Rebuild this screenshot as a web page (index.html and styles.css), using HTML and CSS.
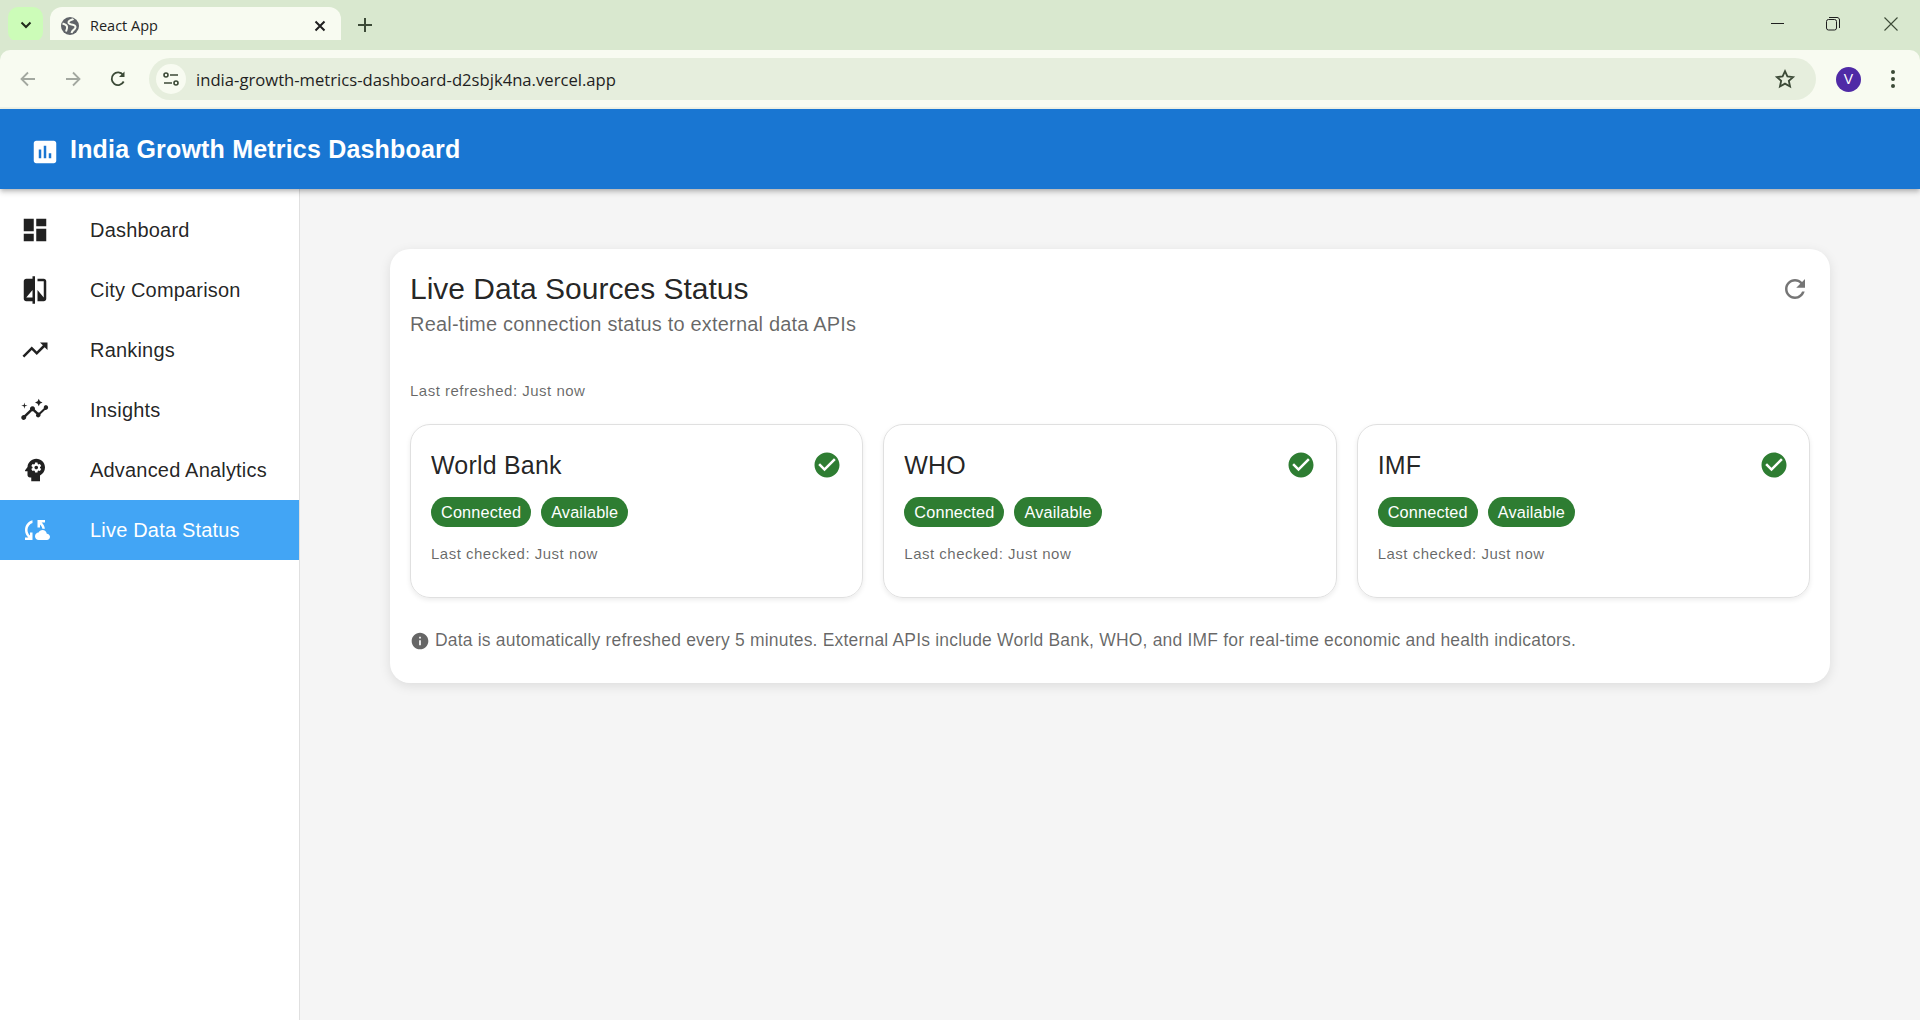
FILE: index.html
```html
<!DOCTYPE html>
<html lang="en">
<head>
    <meta charset="UTF-8">
    <meta name="viewport" content="width=device-width, initial-scale=1.0">
    <title>React App</title>
    <link rel="stylesheet" href="styles.css">
</head>
<body>
    <!-- browser chrome -->
    <div class="tabstrip">
        <div class="tab-search">
            <svg width="20" height="20" viewBox="0 0 20 20"><path d="M5.5 7.5 10 12l4.500-4.500" fill="none" stroke="#1f2a1a" stroke-width="2"/></svg>
        </div>
        <div class="tab">
            <svg class="favicon" width="20" height="20" viewBox="0 0 20 20"><circle cx="10" cy="10" r="9" fill="#5f6368"/><path d="M13.500 3c-1.500 1-4.500 1-5 3s3 2.500 5 3 2.500 2 1.500 3.500-3 2-3.500 4.500M2.500 7.500c2 .5 4 1 4.500 3s-.5 3.500-1 5" fill="none" stroke="#f8fbf1" stroke-width="2"/></svg>
            <span class="tab-title">React App</span>
            <svg class="tab-close" width="14" height="14" viewBox="0 0 14 14"><path d="M2.500 2.500l9 9m0-9-9 9" stroke="#1f1f1f" stroke-width="2"/></svg>
        </div>
        <svg class="new-tab" width="16" height="16" viewBox="0 0 16 16"><path d="M8 1v14M1 8h14" stroke="#3c4a37" stroke-width="2"/></svg>
        <div class="window-controls">
            <svg width="14" height="14" viewBox="0 0 14 14"><path d="M0 6.500h13" stroke="#1f1f1f" stroke-width="1"/></svg>
            <svg width="14" height="14" viewBox="0 0 14 14"><rect x=".5" y="2.500" width="10" height="10.500" rx="2" fill="none" stroke="#1f1f1f"/><path d="M3 .5h8c1.500 0 2.500 1 2.500 2.500v8" fill="none" stroke="#1f1f1f"/></svg>
            <svg width="14" height="14" viewBox="0 0 14 14"><path d="M.5.5l13 13m0-13-13 13" stroke="#3c4a37" stroke-width="1.100"/></svg>
        </div>
    </div>
    <div class="toolbar">
        <svg class="nav-btn" width="18" height="18" viewBox="0 0 18 18"><path d="M16 9H3m6-6.500L2.500 9 9 15.500" fill="none" stroke="#a3a8a0" stroke-width="1.800"/></svg>
        <svg class="nav-btn" width="18" height="18" viewBox="0 0 18 18"><path d="M2 9h13M9 2.500 15.500 9 9 15.500" fill="none" stroke="#a3a8a0" stroke-width="1.800"/></svg>
        <svg class="nav-btn" width="18" height="18" viewBox="0 0 18 18"><path d="M14.700 11.500a6.300 6.300 0 1 1-.6-6.500" fill="none" stroke="#3c4a37" stroke-width="1.800"/><path d="M15.500 1.500v5.500H10z" fill="#3c4a37"/></svg>
        <div class="omnibox">
            <div class="site-info">
                <svg width="18" height="18" viewBox="0 0 18 18"><circle cx="4" cy="5" r="2" fill="none" stroke="#3c4a37" stroke-width="1.600"/><path d="M8 5h8M2 13h8" stroke="#3c4a37" stroke-width="1.600"/><circle cx="14" cy="13" r="2" fill="none" stroke="#3c4a37" stroke-width="1.600"/></svg>
            </div>
            <span class="url">india-growth-metrics-dashboard-d2sbjk4na.vercel.app</span>
            <svg class="star" width="22" height="22" viewBox="0 0 24 24"><path d="M12 3.500l2.600 5.700 6.200.7-4.600 4.200 1.300 6.100-5.500-3.100-5.500 3.100 1.300-6.100-4.600-4.200 6.200-.7z" fill="none" stroke="#3c4a37" stroke-width="2"/></svg>
        </div>
        <div class="avatar">V</div>
        <svg class="kebab" width="6" height="20" viewBox="0 0 6 20"><circle cx="3" cy="3" r="2" fill="#3c4a37"/><circle cx="3" cy="10" r="2" fill="#3c4a37"/><circle cx="3" cy="17" r="2" fill="#3c4a37"/></svg>
    </div>

    <!-- app -->
    <header class="app-bar">
        <svg class="app-bar-icon" viewBox="0 0 24 24"><path d="M19 3H5c-1.100 0-2 .9-2 2v14c0 1.100.9 2 2 2h14c1.100 0 2-.9 2-2V5c0-1.100-.9-2-2-2zM9 17H7v-7h2v7zm4 0h-2V7h2v10zm4 0h-2v-4h2v4z"/></svg>
        <h1>India Growth Metrics Dashboard</h1>
    </header>
    <div class="layout">
        <nav class="sidebar">
            <a class="nav-item">
                <svg class="nav-icon" viewBox="0 0 24 24"><path d="M3 13h8V3H3v10zm0 8h8v-6H3v6zm10 0h8V11h-8v10zm0-18v6h8V3h-8z"/></svg>
                <span>Dashboard</span>
            </a>
            <a class="nav-item">
                <svg class="nav-icon" viewBox="0 0 24 24"><path d="M10 3H5c-1.100 0-2 .9-2 2v14c0 1.100.9 2 2 2h5v2h2V1h-2v2zm0 15H5l5-6v6zm9-15h-5v2h5v13l-5-6v9h5c1.100 0 2-.9 2-2V5c0-1.100-.9-2-2-2z"/></svg>
                <span>City Comparison</span>
            </a>
            <a class="nav-item">
                <svg class="nav-icon" viewBox="0 0 24 24"><path d="m16 6 2.290 2.290-4.880 4.880-4-4L2 16.590 3.410 18l6-6 4 4 6.300-6.290L22 12V6z"/></svg>
                <span>Rankings</span>
            </a>
            <a class="nav-item">
                <svg class="nav-icon" viewBox="0 0 24 24"><path d="M21 8c-1.450 0-2.260 1.440-1.930 2.510l-3.550 3.560c-.3-.09-.74-.09-1.040 0l-2.550-2.550C12.270 10.450 11.460 9 10 9c-1.450 0-2.270 1.440-1.930 2.520l-4.560 4.550C2.440 15.740 1 16.550 1 18c0 1.100.9 2 2 2 1.450 0 2.260-1.440 1.930-2.510l4.550-4.560c.3.09.74.09 1.040 0l2.550 2.550C12.270 16.550 13.080 18 14.500 18c1.450 0 2.270-1.440 1.930-2.520l3.560-3.550c1.070.33 2.510-.48 2.510-1.930 0-1.100-.9-2-2-2z"/><path d="m15 9 .94-2.070L18 6l-2.060-.93L15 3l-.92 2.070L12 6l2.080.93zM3.500 11 4 9l2-.5L4 8l-.5-2L3 8l-2 .5L3 9z"/></svg>
                <span>Insights</span>
            </a>
            <a class="nav-item">
                <svg class="nav-icon" viewBox="0 0 24 24"><path d="M13 8.570c-.79 0-1.430.64-1.430 1.430s.64 1.430 1.430 1.430 1.430-.64 1.430-1.430-.64-1.430-1.430-1.430z"/><path d="M13 3C9.250 3 6.200 5.940 6.020 9.640L4.100 12.200c-.25.33-.01.8.4.8H6v3c0 1.100.9 2 2 2h1v3h7v-4.680c2.360-1.120 4-3.530 4-6.320 0-3.870-3.130-7-7-7zm3 7c0 .13-.01.26-.02.39l.83.66c.08.06.1.16.05.25l-.8 1.390c-.05.09-.16.12-.24.09l-.99-.4c-.21.16-.43.29-.67.39L14 13.830c-.01.1-.1.17-.2.17h-1.600c-.1 0-.18-.07-.2-.17l-.15-1.060c-.25-.1-.47-.23-.68-.39l-.99.4c-.09.03-.2 0-.25-.09l-.8-1.390c-.05-.08-.03-.19.05-.25l.84-.66c-.01-.13-.02-.26-.02-.39s.02-.27.04-.39l-.85-.66c-.08-.06-.1-.16-.05-.26l.8-1.380c.05-.09.15-.12.24-.09l1 .4c.2-.15.43-.29.67-.39L12 6.170c.02-.1.1-.17.2-.17h1.600c.1 0 .18.07.2.17l.15 1.060c.24.1.46.23.67.39l1-.4c.09-.03.2 0 .24.09l.8 1.380c.05.09.03.2-.05.26l-.85.66c.03.12.04.25.04.39z"/></svg>
                <span>Advanced Analytics</span>
            </a>
            <a class="nav-item active">
                <svg class="nav-icon" viewBox="0 0 24 24"><path d="M21.500 14.980c-.02 0-.03 0-.05.01C21.200 13.300 19.760 12 18 12c-1.400 0-2.600.83-3.160 2.020C13.260 14.100 12 15.400 12 17c0 1.660 1.340 3 3 3l6.500-.02c1.380 0 2.500-1.120 2.500-2.500s-1.120-2.500-2.500-2.500zM10 4.260v2.090C7.670 7.180 6 9.390 6 12c0 1.770.78 3.340 2 4.440V14h2v6H4v-2h2.730C5.060 16.540 4 14.400 4 12c0-3.730 2.550-6.850 6-7.740zM20 6h-2.730c1.430 1.260 2.410 3.040 2.660 5.050h-2.020c-.23-1.360-.93-2.550-1.910-3.440V10h-2V4h6v2z"/></svg>
                <span>Live Data Status</span>
            </a>
        </nav>
        <main class="content">
            <section class="status-panel">
                <div class="panel-head">
                    <div>
                        <h2>Live Data Sources Status</h2>
                        <p class="subtitle">Real-time connection status to external data APIs</p>
                    </div>
                    <div class="refresh">
                        <svg viewBox="0 0 24 24"><path d="M17.650 6.350C16.200 4.900 14.210 4 12 4c-4.420 0-7.990 3.580-7.990 8s3.570 8 7.990 8c3.730 0 6.840-2.550 7.730-6h-2.080c-.82 2.330-3.040 4-5.650 4-3.310 0-6-2.690-6-6s2.690-6 6-6c1.660 0 3.140.69 4.220 1.780L13 11h7V4l-2.350 2.350z"/></svg>
                    </div>
                </div>
                <p class="caption refreshed">Last refreshed: Just now</p>
                <div class="source-grid">
                    <div class="source-card">
                        <div class="source-head">
                            <h3>World Bank</h3>
                            <svg class="check" viewBox="0 0 24 24"><path d="M12 2C6.480 2 2 6.480 2 12s4.480 10 10 10 10-4.480 10-10S17.520 2 12 2zm-2 15-5-5 1.410-1.410L10 14.170l7.590-7.590L19 8l-9 9z"/></svg>
                        </div>
                        <div class="chips"><span class="chip">Connected</span><span class="chip">Available</span></div>
                        <p class="caption">Last checked: Just now</p>
                    </div>
                    <div class="source-card">
                        <div class="source-head">
                            <h3>WHO</h3>
                            <svg class="check" viewBox="0 0 24 24"><path d="M12 2C6.480 2 2 6.480 2 12s4.480 10 10 10 10-4.480 10-10S17.520 2 12 2zm-2 15-5-5 1.410-1.410L10 14.170l7.590-7.590L19 8l-9 9z"/></svg>
                        </div>
                        <div class="chips"><span class="chip">Connected</span><span class="chip">Available</span></div>
                        <p class="caption">Last checked: Just now</p>
                    </div>
                    <div class="source-card">
                        <div class="source-head">
                            <h3>IMF</h3>
                            <svg class="check" viewBox="0 0 24 24"><path d="M12 2C6.480 2 2 6.480 2 12s4.480 10 10 10 10-4.480 10-10S17.520 2 12 2zm-2 15-5-5 1.410-1.410L10 14.170l7.590-7.590L19 8l-9 9z"/></svg>
                        </div>
                        <div class="chips"><span class="chip">Connected</span><span class="chip">Available</span></div>
                        <p class="caption">Last checked: Just now</p>
                    </div>
                </div>
                <div class="info-note">
                    <svg viewBox="0 0 24 24"><path d="M12 2C6.480 2 2 6.480 2 12s4.480 10 10 10 10-4.480 10-10S17.520 2 12 2zm1 15h-2v-6h2v6zm0-8h-2V7h2v2z"/></svg>
                    <span>Data is automatically refreshed every 5 minutes. External APIs include World Bank, WHO, and IMF for real-time economic and health indicators.</span>
                </div>
            </section>
        </main>
    </div>
</body>
</html>
```

FILE: styles.css
```css
* {
    box-sizing: border-box;
}
html, body {
    height: 1020px;
}
body {
    margin: 0;
    overflow: hidden;
    display: flex;
    flex-direction: column;
    font-family: "Liberation Sans", Arial, sans-serif;
    background-color: #f5f5f5;
    color: rgba(0, 0, 0, 0.87);
}
h1, h2, h3, p {
    margin: 0;
    font-weight: 400;
}

/* browser chrome */
.tabstrip {
    height: 50px;
    flex: none;
    display: flex;
    align-items: flex-start;
    padding: 7px 0 0 8px;
    background-color: #d9e8cf;
}
.tab-search {
    width: 35px;
    height: 35px;
    border-radius: 10px;
    background-color: #ccfcb8;
    display: flex;
    align-items: center;
    justify-content: center;
}
.tab {
    width: 291px;
    height: 43px;
    margin-left: 7px;
    padding: 0 14px 6px 10px;
    display: flex;
    align-items: center;
    background-color: #f8fbf1;
    border-radius: 12px 12px 0 0;
}
.tab-title {
    flex: 1;
    margin-left: 10px;
    font-family: "Open Sans", sans-serif;
    font-size: 14.500px;
    color: #1f1f1f;
}
.new-tab {
    margin: 10px 0 0 16px;
}
.window-controls {
    margin-left: auto;
    display: flex;
    gap: 41px;
    padding: 10px 22px 0 0;
}
.window-controls svg:last-child {
    margin-left: 3px;
}
.toolbar {
    height: 59px;
    flex: none;
    display: flex;
    align-items: center;
    padding: 1px 24px 0 19px;
    background-color: #f8fbf1;
    border-bottom: 2px solid #eef1e6;
    border-top-left-radius: 10px;
    border-top-right-radius: 10px;
    box-shadow: 0 -10px 0 #d9e8cf;
}
.nav-btn {
    margin-right: 27px;
}
.nav-btn:nth-child(3) {
    margin-right: 0;
}
.omnibox {
    flex: 1;
    height: 42px;
    margin-left: 22px;
    padding: 0 20px 0 7px;
    display: flex;
    align-items: center;
    background-color: #e6eedd;
    border-radius: 21px;
}
.site-info {
    width: 30px;
    height: 30px;
    border-radius: 50%;
    background-color: #f8fbf1;
    display: flex;
    align-items: center;
    justify-content: center;
}
.url {
    flex: 1;
    margin-left: 10px;
    font-family: "Open Sans", sans-serif;
    font-size: 16.650px;
    color: #1f1f1f;
}
.avatar {
    width: 25px;
    height: 25px;
    margin-left: 20px;
    border-radius: 50%;
    background-color: #4f2aa6;
    color: #fff;
    font-size: 14px;
    display: flex;
    align-items: center;
    justify-content: center;
}
.kebab {
    margin-left: 29px;
}

/* app bar */
.app-bar {
    height: 80px;
    flex: none;
    display: flex;
    align-items: center;
    padding-left: 30px;
    background-color: #1976d2;
    color: #fff;
    box-shadow: 0 2px 4px -1px rgba(0, 0, 0, 0.2), 0 4px 5px 0 rgba(0, 0, 0, 0.14);
    position: relative;
}
.app-bar-icon {
    width: 30px;
    height: 30px;
    fill: #fff;
    margin: 5px 10px 0 0;
}
.app-bar h1 {
    font-size: 25px;
    font-weight: 700;
    letter-spacing: 0.19px;
}

/* sidebar */
.layout {
    flex: 1;
    display: flex;
    min-height: 0;
}
.sidebar {
    width: 300px;
    flex: none;
    padding-top: 11px;
    background: #fff;
    border-right: 1px solid #e0e0e0;
}
.nav-item {
    height: 60px;
    display: flex;
    align-items: center;
    padding-left: 20px;
    font-size: 20px;
    letter-spacing: 0.19px;
}
.nav-icon {
    width: 30px;
    height: 30px;
    margin-right: 40px;
    fill: rgba(0, 0, 0, 0.87);
}
.nav-item.active {
    background-color: #42a5f5;
    color: #fff;
}
.nav-item.active .nav-icon {
    fill: #fff;
}

/* content */
.content {
    flex: 1;
    padding: 60px 90px;
}
.status-panel {
    padding: 20px;
    background: #fff;
    border-radius: 20px;
    box-shadow: 0 3px 12px rgba(0, 0, 0, 0.1);
}
.panel-head {
    display: flex;
    justify-content: space-between;
    align-items: flex-start;
}
.panel-head h2 {
    font-size: 30px;
    line-height: 40px;
}
.subtitle {
    font-size: 20px;
    line-height: 30px;
    letter-spacing: 0.19px;
    color: rgba(0, 0, 0, 0.6);
}
.refresh {
    height: 40px;
    display: flex;
    align-items: center;
}
.refresh svg {
    width: 30px;
    height: 30px;
    fill: rgba(0, 0, 0, 0.54);
}
.caption {
    font-size: 15px;
    line-height: 25px;
    letter-spacing: 0.5px;
    color: rgba(0, 0, 0, 0.6);
}
.refreshed {
    margin-top: 39px;
}
.source-grid {
    margin-top: 21px;
    display: grid;
    grid-template-columns: repeat(3, 1fr);
    gap: 20px;
}
.source-card {
    height: 174px;
    padding: 20px;
    border: 1px solid #e0e0e0;
    border-radius: 20px;
    box-shadow: 0 2px 5px rgba(0, 0, 0, 0.08);
}
.source-head {
    display: flex;
    justify-content: space-between;
    align-items: center;
    height: 40px;
}
.source-head h3 {
    font-size: 25px;
    letter-spacing: 0.19px;
}
.check {
    width: 30px;
    height: 30px;
    fill: #2e7d32;
}
.chips {
    display: flex;
    gap: 10px;
    margin: 12px 0 14px;
}
.chip {
    height: 30px;
    padding: 0 10px;
    display: flex;
    align-items: center;
    border-radius: 15px;
    background-color: #2e7d32;
    color: #fff;
    font-size: 16.250px;
    letter-spacing: 0.17px;
}
.info-note {
    margin: 30px 0 10px;
    display: flex;
    align-items: center;
    color: rgba(0, 0, 0, 0.6);
    font-size: 17.500px;
    line-height: 25px;
    letter-spacing: 0.19px;
}
.info-note svg {
    width: 20px;
    height: 20px;
    margin-right: 5px;
    fill: rgba(0, 0, 0, 0.6);
}
```
